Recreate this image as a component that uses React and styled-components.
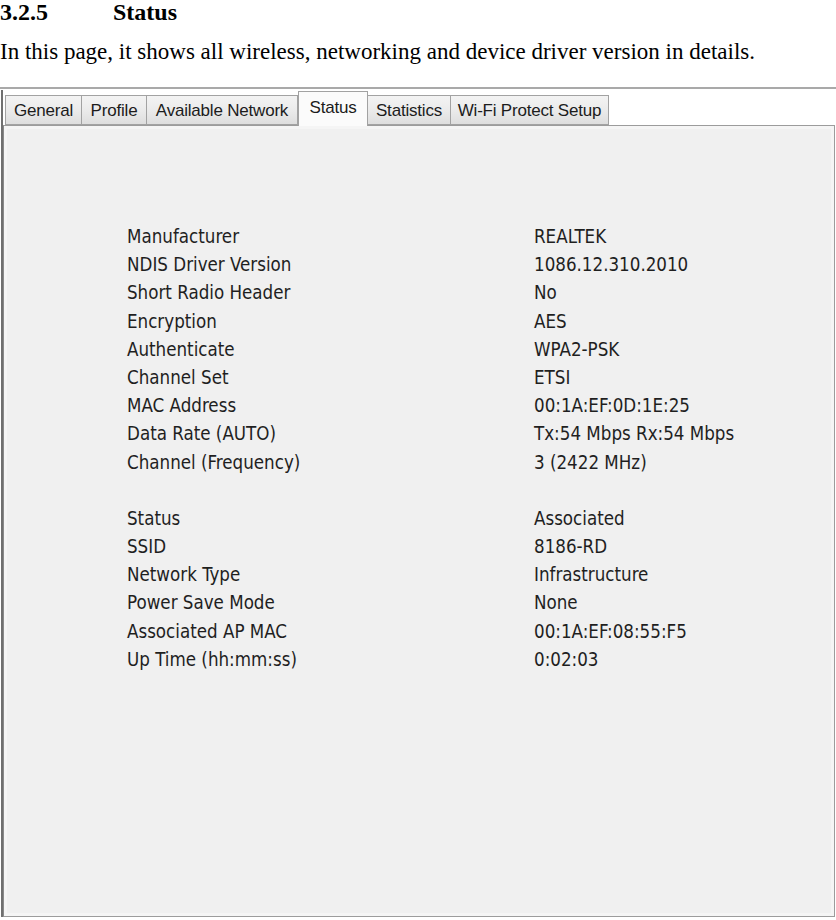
import React from "react";
import styled, { createGlobalStyle } from "styled-components";

const GlobalStyle = createGlobalStyle`
  html, body { margin: 0; padding: 0; background: #ffffff; }
  body { width: 836px; height: 920px; overflow: hidden; }
`;

const Page = styled.div`
  width: 836px;
  height: 920px;
  background: #ffffff;
`;

const Heading = styled.h2`
  margin: 0;
  display: flex;
  font-family: "Liberation Serif", "Times New Roman", serif;
  font-weight: bold;
  font-size: 24px;
  line-height: 24px;
  color: #000;
`;

const HeadNum = styled.span`
  width: 113px;
`;

const Para = styled.p`
  margin: 16px 0 0 0;
  font-family: "Liberation Serif", "Times New Roman", serif;
  font-size: 23px;
  line-height: 24px;
  color: #000;
  white-space: nowrap;
`;

const Frame = styled.div`
  margin-top: 23px;
  border-top: 2px solid #a9a9a9;
  width: 836px;
`;

const Area = styled.div`
  margin-top: 1px;
  margin-left: 1px;
  width: 832px;
  border-left: 2px solid #707070;
`;

const TabStrip = styled.div`
  display: flex;
  align-items: flex-end;
  height: 35px;
  padding-left: 2px;
`;

const Tab = styled.div`
  position: relative;
  box-sizing: border-box;
  width: ${(p) => p.$w}px;
  height: ${(p) => (p.$active ? 35 : 30)}px;
  margin-bottom: ${(p) => (p.$active ? -1 : 0)}px;
  z-index: ${(p) => (p.$active ? 2 : 1)};
  border: 1px solid #a2a2a2;
  border-bottom: ${(p) => (p.$active ? "none" : "1px solid #a2a2a2")};
  border-left: ${(p) => (p.$first || p.$active ? "1px solid #a2a2a2" : "none")};
  ${(p) => (p.$afterActive ? "border-left: none;" : "")}
  background: ${(p) =>
    p.$active
      ? "#fbfbfb"
      : "linear-gradient(#f3f3f3 0%, #ebebeb 50%, #dedede 100%)"};
  font-family: "Liberation Sans", Arial, sans-serif;
  font-size: 17px;
  color: #1c1c1c;
  display: flex;
  justify-content: center;
  align-items: ${(p) => (p.$active ? "flex-start" : "center")};
  padding-top: ${(p) => (p.$active ? 6 : 1)}px;
  letter-spacing: -0.2px;
  white-space: nowrap;
`;

const Panel = styled.div`
  box-sizing: border-box;
  height: 792px;
  border: 1px solid #9c9c9c;
  border-left-color: #8a8a8a;
  background: #f0f0f0;
  box-shadow: inset 0 0 0 3px #f5f5f5;
  padding: 97px 0 0 123px;
`;

const InfoGrid = styled.div`
  display: grid;
  grid-template-columns: 407px auto;
  font-family: "DejaVu Sans Condensed", "DejaVu Sans", sans-serif;
  font-stretch: semi-condensed;
  font-size: 18.6px;
  line-height: 28.2px;
  color: #1f1f1f;
`;

const Cell = styled.div`
  white-space: nowrap;
  height: 28.2px;
`;

const Spacer = styled.div`
  grid-column: 1 / span 2;
  height: 28.2px;
`;

const group1 = [
  ["Manufacturer", "REALTEK"],
  ["NDIS Driver Version", "1086.12.310.2010"],
  ["Short Radio Header", "No"],
  ["Encryption", "AES"],
  ["Authenticate", "WPA2-PSK"],
  ["Channel Set", "ETSI"],
  ["MAC Address", "00:1A:EF:0D:1E:25"],
  ["Data Rate (AUTO)", "Tx:54 Mbps Rx:54 Mbps"],
  ["Channel (Frequency)", "3 (2422 MHz)"],
];

const group2 = [
  ["Status", "Associated"],
  ["SSID", "8186-RD"],
  ["Network Type", "Infrastructure"],
  ["Power Save Mode", "None"],
  ["Associated AP MAC", "00:1A:EF:08:55:F5"],
  ["Up Time (hh:mm:ss)", "0:02:03"],
];

const tabs = [
  { label: "General", w: 77 },
  { label: "Profile", w: 65 },
  { label: "Available Network", w: 151 },
  { label: "Status", w: 70, active: true },
  { label: "Statistics", w: 83 },
  { label: "Wi-Fi Protect Setup", w: 158 },
];

export default function App() {
  return (
    <Page>
      <GlobalStyle />
      <Heading>
        <HeadNum>3.2.5</HeadNum>
        <span>Status</span>
      </Heading>
      <Para>
        In this page, it shows all wireless, networking and device driver version in details.
      </Para>
      <Frame>
        <Area>
          <TabStrip>
            {tabs.map((t, i) => (
              <Tab
                key={t.label}
                $w={t.w}
                $active={t.active}
                $first={i === 0}
                $afterActive={i > 0 && tabs[i - 1].active}
              >
                {t.label}
              </Tab>
            ))}
          </TabStrip>
          <Panel>
            <InfoGrid>
              {group1.map(([k, v]) => (
                <React.Fragment key={k}>
                  <Cell>{k}</Cell>
                  <Cell>{v}</Cell>
                </React.Fragment>
              ))}
              <Spacer />
              {group2.map(([k, v]) => (
                <React.Fragment key={k}>
                  <Cell>{k}</Cell>
                  <Cell>{v}</Cell>
                </React.Fragment>
              ))}
            </InfoGrid>
          </Panel>
        </Area>
      </Frame>
    </Page>
  );
}
